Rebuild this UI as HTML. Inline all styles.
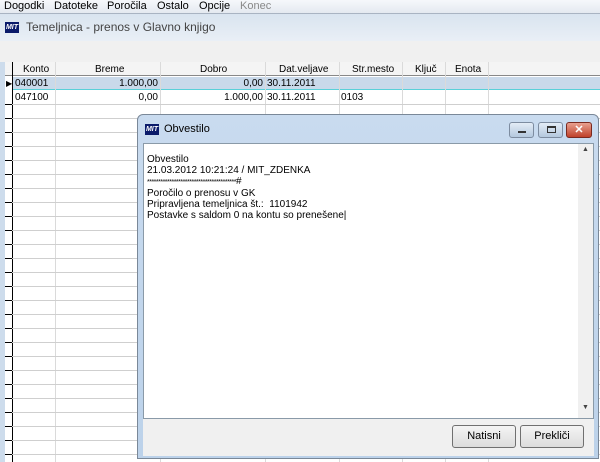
<!DOCTYPE html>
<html><head><meta charset="utf-8"><style>
*{margin:0;padding:0;box-sizing:border-box}
body{width:600px;height:455px;overflow:hidden;background:#f0f0f0;font-family:"Liberation Sans",sans-serif;font-size:11px;position:relative;color:#000}
.abs{position:absolute}
.menu{left:0;top:0;width:600px;height:14px;background:linear-gradient(#f6f8fb,#e4e9f0);border-bottom:1px solid #a9b4c2}
.menu span{position:absolute;top:0;font-size:11px;line-height:13px}
.title{left:0;top:14px;width:600px;height:27px;background:linear-gradient(#d9e4ef,#e9eff6);color:#444;font-size:12px}
.logo{background:#0a1a6a;color:#fff;font-size:7px;font-weight:bold;text-align:center;line-height:11px;font-style:italic}
.grid{left:5px;top:62px;width:600px;height:400px;background:#fff}
.hline{position:absolute;left:0;height:1px;background:#cfcfcf}
.hline:before{content:"";position:absolute;left:0;top:0;width:7px;height:1px;background:#000}
.vline{position:absolute;width:1px;background:#dadada}
.cell{position:absolute;font-size:10px;line-height:13px;white-space:nowrap}
.dlg{left:137px;top:114px;width:462px;height:345px;background:linear-gradient(#c9dbef,#bcd2ea);border:1px solid #7a8898;border-radius:6px 6px 0 0}
.tbtn{position:absolute;top:7px;height:16px;border:1px solid #7d8ca0;border-radius:3px;background:linear-gradient(#e3ecf6,#b4c8de)}
.btn{position:absolute;top:425px;height:23px;width:64px;border:1px solid #707070;border-radius:3px;background:linear-gradient(#f4f4f4,#dcdcdc);text-align:center;line-height:21px;font-size:11px}
</style></head><body>
<div class="abs menu">
<span style="left:4px">Dogodki</span><span style="left:54px">Datoteke</span><span style="left:107px">Poročila</span><span style="left:157px">Ostalo</span><span style="left:199px">Opcije</span><span style="left:240px;color:#888">Konec</span>
</div>
<div class="abs title">
<div class="abs logo" style="left:5px;top:8px;width:14px;height:11px">MIT</div>
<div class="abs" style="left:26px;top:6px">Temeljnica - prenos v Glavno knjigo</div>
</div>
<div class="abs" style="left:0;top:62px;width:5px;height:400px;background:#cddcec"></div>
<div class="abs grid">
<div class="abs" style="left:0;top:0;width:600px;height:14px;background:#f4f4f4;border-bottom:1px solid #888"></div>
<div class="abs" style="left:8px;top:15px;width:600px;height:13px;background:#c9d9ea;border-bottom:1px solid #5ad0d8"></div>
<div class="abs" style="left:0;top:0;width:8px;height:400px;border-right:1px solid #000"></div>
<div class="vline" style="left:50px;top:0;height:400px"></div>
<div class="vline" style="left:155px;top:0;height:400px"></div>
<div class="vline" style="left:260px;top:0;height:400px"></div>
<div class="vline" style="left:334px;top:0;height:400px"></div>
<div class="vline" style="left:397px;top:0;height:400px"></div>
<div class="vline" style="left:440px;top:0;height:400px"></div>
<div class="vline" style="left:483px;top:0;height:400px"></div>
<div class="cell" style="left:18px;top:1px">Konto</div>
<div class="cell" style="left:90px;top:1px">Breme</div>
<div class="cell" style="left:195px;top:1px">Dobro</div>
<div class="cell" style="left:274px;top:1px">Dat.veljave</div>
<div class="cell" style="left:347px;top:1px">Str.mesto</div>
<div class="cell" style="left:410px;top:1px">Ključ</div>
<div class="cell" style="left:450px;top:1px">Enota</div>
<div class="cell" style="left:1px;top:15px;font-size:8px">&#9654;</div>
<div class="cell" style="left:10px;top:15px">040001</div>
<div class="cell" style="left:100px;top:15px;width:53px;text-align:right">1.000,00</div>
<div class="cell" style="left:200px;top:15px;width:58px;text-align:right">0,00</div>
<div class="cell" style="left:262px;top:15px">30.11.2011</div>
<div class="cell" style="left:10px;top:29px">047100</div>
<div class="cell" style="left:100px;top:29px;width:53px;text-align:right">0,00</div>
<div class="cell" style="left:200px;top:29px;width:58px;text-align:right">1.000,00</div>
<div class="cell" style="left:262px;top:29px">30.11.2011</div>
<div class="cell" style="left:336px;top:29px">0103</div>
<div class="hline" style="top:42px;width:600px"></div>
<div class="hline" style="top:56px;width:600px"></div>
<div class="hline" style="top:70px;width:600px"></div>
<div class="hline" style="top:84px;width:600px"></div>
<div class="hline" style="top:98px;width:600px"></div>
<div class="hline" style="top:112px;width:600px"></div>
<div class="hline" style="top:126px;width:600px"></div>
<div class="hline" style="top:140px;width:600px"></div>
<div class="hline" style="top:154px;width:600px"></div>
<div class="hline" style="top:168px;width:600px"></div>
<div class="hline" style="top:182px;width:600px"></div>
<div class="hline" style="top:196px;width:600px"></div>
<div class="hline" style="top:210px;width:600px"></div>
<div class="hline" style="top:224px;width:600px"></div>
<div class="hline" style="top:238px;width:600px"></div>
<div class="hline" style="top:252px;width:600px"></div>
<div class="hline" style="top:266px;width:600px"></div>
<div class="hline" style="top:280px;width:600px"></div>
<div class="hline" style="top:294px;width:600px"></div>
<div class="hline" style="top:308px;width:600px"></div>
<div class="hline" style="top:322px;width:600px"></div>
<div class="hline" style="top:336px;width:600px"></div>
<div class="hline" style="top:350px;width:600px"></div>
<div class="hline" style="top:364px;width:600px"></div>
<div class="hline" style="top:378px;width:600px"></div>
<div class="hline" style="top:392px;width:600px"></div>
</div>
<div class="abs dlg">
<div class="abs logo" style="left:7px;top:9px;width:14px;height:11px">MIT</div>
<div class="abs" style="left:26px;top:8px;font-size:11px">Obvestilo</div>
<div class="tbtn" style="left:371px;width:25px"><div class="abs" style="left:8px;top:8px;width:8px;height:2px;background:#333"></div></div>
<div class="tbtn" style="left:400px;width:25px"><div class="abs" style="left:8px;top:3px;width:9px;height:7px;border:1px solid #333;border-top-width:2px"></div></div>
<div class="tbtn" style="left:428px;width:26px;background:linear-gradient(#e8a08f,#c0412a);border-color:#7a2a20;color:#fff;text-align:center;font-weight:bold;line-height:14px;font-size:11px">✕</div>
<div class="abs" style="left:5px;top:28px;width:451px;height:276px;background:#fff;border:1px solid #8a9aa8"></div>
<div class="abs" style="left:440px;top:29px;width:15px;height:274px;background:#f0f0f0"></div>
<div class="abs" style="left:444px;top:31px;font-size:7px;color:#444">▲</div>
<div class="abs" style="left:444px;top:289px;font-size:7px;color:#444">▼</div>
<div class="abs" style="left:5px;top:304px;width:451px;height:37px;background:#f0f0f0"></div>
<div class="abs" style="left:9px;top:39px;font-size:10px;line-height:11px">Obvestilo<br>21.03.2012 10:21:24 / MIT_ZDENKA<br><span style="font-size:7px;letter-spacing:-0.5px">****************************************</span>#<br>Poročilo o prenosu v GK<br>Pripravljena temeljnica št.:&nbsp; 1101942<br>Postavke s saldom 0 na kontu so prenešene|</div>
</div>
<div class="btn" style="left:452px">Natisni</div>
<div class="btn" style="left:520px">Prekliči</div>
</body></html>
